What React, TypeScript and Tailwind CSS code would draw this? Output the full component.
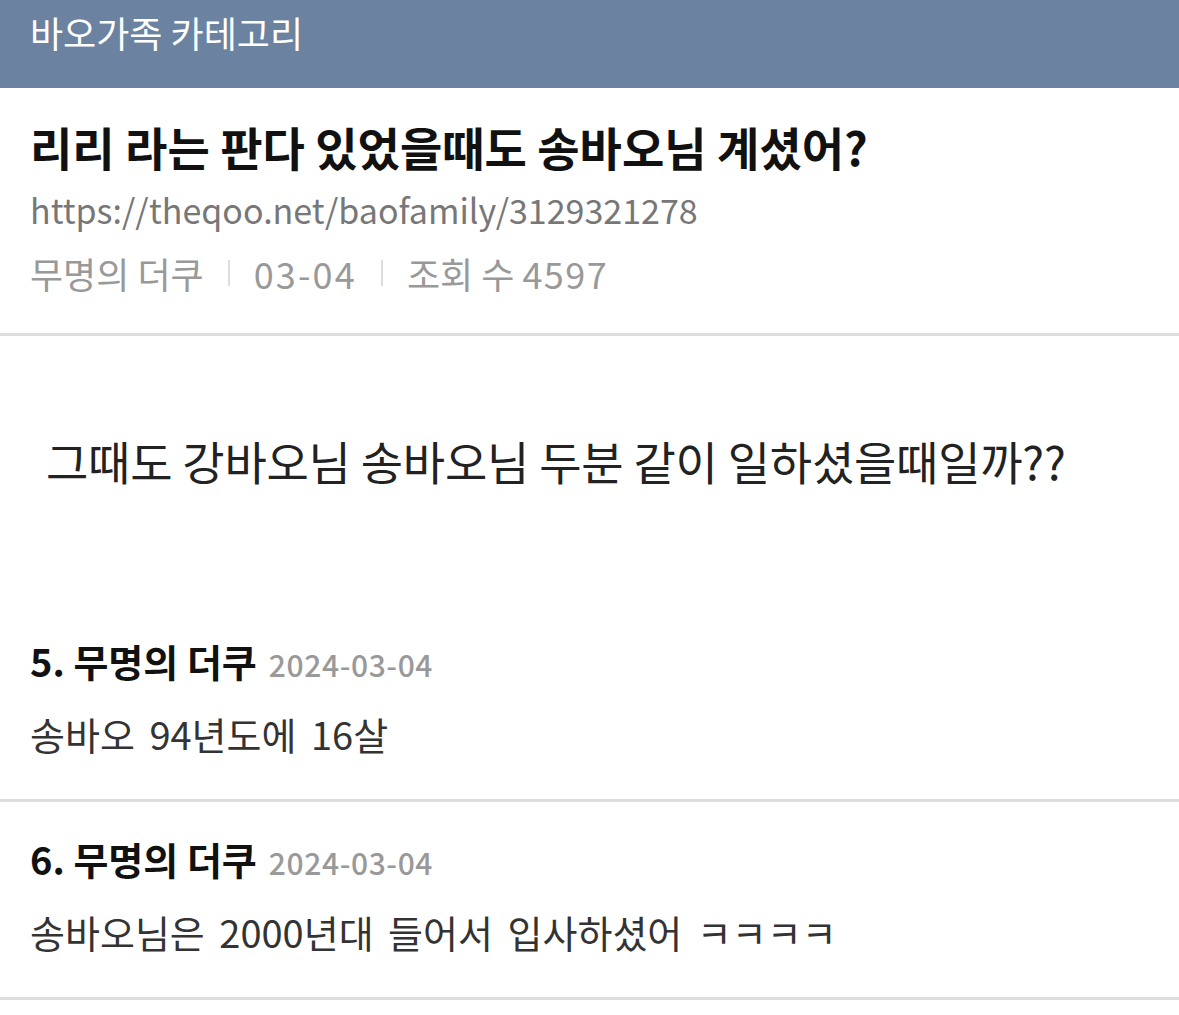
import React from 'react';

const font = { fontFamily: '"Noto Sans CJK KR", "Noto Sans", sans-serif' };

const comments = [
    { no: 5, name: '무명의 더쿠', date: '2024-03-04', text: '송바오 94년도에 16살' },
    { no: 6, name: '무명의 더쿠', date: '2024-03-04', text: '송바오님은 2000년대 들어서 입사하셨어 ㅋㅋㅋㅋ' },
];

export default function App() {
    return (
        <div className="w-[1179px] h-[1015px] bg-white overflow-hidden" style={font}>
            {/* category bar */}
            <div className="h-[88px] bg-[#6b83a0] flex items-start pt-[8px] px-[30px]">
                <span className="text-white text-[36px] leading-[48px]">바오가족 카테고리</span>
            </div>

            {/* post head */}
            <div className="h-[245px] px-[30px] pt-[26px] flex flex-col">
                <h1 className="text-[#111] text-[46px] font-bold leading-[64px]">
                    리리 라는 판다 있었을때도 송바오님 계셨어?
                </h1>
                <div className="text-[#777] text-[34px] leading-[64px]">
                    https://theqoo.net/baofamily/3129321278
                </div>
                <div className="flex items-center text-[#999] text-[36px] leading-[62px]">
                    <span>무명의 더쿠</span>
                    <span className="w-[2px] h-[26px] bg-[#ddd] mx-[24px]" />
                    <span className="tracking-[0.06em]">03-04</span>
                    <span className="w-[2px] h-[26px] bg-[#ddd] mx-[24px]" />
                    <span>조회 수 <span className="tracking-[0.04em]">4597</span></span>
                </div>
            </div>
            <div className="h-[3px] bg-[#ddd]" />

            {/* body */}
            <div className="h-[268px] pl-[46px] pr-[30px] pt-[96px]">
                <p className="text-[#222] text-[46px] leading-[56px] tracking-[-0.005em]">
                    그때도 강바오님 송바오님 두분 같이 일하셨을때일까??
                </p>
            </div>

            {/* comments */}
            {comments.map((c) => (
                <div key={c.no}>
                    <div className="h-[195px] px-[30px] pt-[32px]">
                        <div className="flex items-baseline gap-[12px] leading-[50px]">
                            <span className="text-[#111] text-[38px] font-bold">
                                {c.no}. {c.name}
                            </span>
                            <span className="text-[#999] text-[30px] font-medium tracking-[0.02em]">{c.date}</span>
                        </div>
                        <div className="text-[#333] text-[38px] leading-[60px] mt-[15px] [word-spacing:6px]">{c.text}</div>
                    </div>
                    <div className="h-[3px] bg-[#ddd]" />
                </div>
            ))}
        </div>
    );
}
